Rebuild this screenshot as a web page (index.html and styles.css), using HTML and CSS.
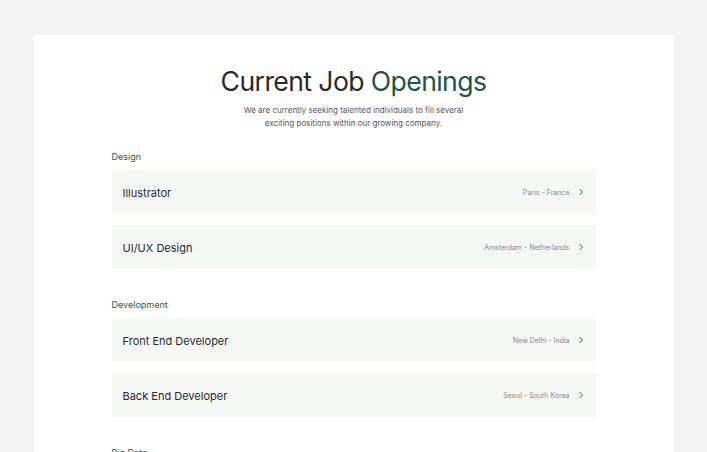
FILE: index.html
```html
<!DOCTYPE html>
<html lang="en">
<head>
<meta charset="utf-8">
<title>Current Job Openings</title>
<link rel="stylesheet" href="styles.css">
</head>
<body>
<main class="card">
  <header class="intro">
    <h1 class="title">Current Job <span class="accent">Openings</span></h1>
    <p class="lead">We are currently seeking talented individuals to fill several<br>exciting positions within our growing company.</p>
  </header>

  <section class="group">
    <h2 class="group-label">Design</h2>
    <ul class="jobs">
      <li class="job"><span class="job-name">Illustrator</span><span class="job-meta"><span class="job-loc">Paris - France</span><svg class="chev" viewBox="0 0 8 8"><path d="M2.5 1 L5.5 4 L2.5 7"/></svg></span></li>
      <li class="job"><span class="job-name">UI/UX Design</span><span class="job-meta"><span class="job-loc">Amsterdam - Netherlands</span><svg class="chev" viewBox="0 0 8 8"><path d="M2.5 1 L5.5 4 L2.5 7"/></svg></span></li>
    </ul>
  </section>

  <section class="group">
    <h2 class="group-label">Development</h2>
    <ul class="jobs">
      <li class="job"><span class="job-name">Front End Developer</span><span class="job-meta"><span class="job-loc">New Delhi - India</span><svg class="chev" viewBox="0 0 8 8"><path d="M2.5 1 L5.5 4 L2.5 7"/></svg></span></li>
      <li class="job"><span class="job-name">Back End Developer</span><span class="job-meta"><span class="job-loc">Seoul - South Korea</span><svg class="chev" viewBox="0 0 8 8"><path d="M2.5 1 L5.5 4 L2.5 7"/></svg></span></li>
    </ul>
  </section>

  <section class="group">
    <h2 class="group-label">Big Data</h2>
  </section>
</main>
</body>
</html>
```
FILE: styles.css
```css
html, body {
  margin: 0;
  padding: 0;
}
body {
  background: #f3f3f3;
  font-family: Inter, "Liberation Sans", sans-serif;
  padding-top: 35px;
  height: 452px;
  box-sizing: border-box;
  overflow: hidden;
}
.card {
  width: 640px;
  margin: 0 auto;
  background: #ffffff;
  padding: 29px 78px 40px;
  box-sizing: border-box;
  min-height: 500px;
}
.intro {
  text-align: center;
}
.title {
  margin: 0;
  font-size: 26.6px;
  line-height: 34px;
  font-weight: 400;
  letter-spacing: -0.6px;
  color: #2a2a2a;
}
.accent {
  color: #1d5446;
}
.lead {
  margin: 6px 0 0;
  font-size: 8px;
  line-height: 13px;
  color: #555555;
}
.group {
  margin-top: 21px;
}
.group + .group {
  margin-top: 30px;
}
.group-label {
  margin: 0 0 7px;
  font-size: 9px;
  line-height: 12px;
  font-weight: 400;
  color: #2a5a4e;
}
.jobs {
  list-style: none;
  margin: 0;
  padding: 0;
  display: flex;
  flex-direction: column;
  gap: 11px;
}
.job {
  height: 44px;
  background: #f6f8f6;
  display: flex;
  align-items: center;
  justify-content: space-between;
  padding: 0 11px;
}
.job-name {
  font-size: 11px;
  color: #2b2b2b;
  padding-top: 1px;
}
.job-meta {
  display: flex;
  align-items: center;
  gap: 7px;
}
.job-loc {
  font-size: 7px;
  color: #888888;
}
.chev {
  width: 8px;
  height: 8px;
  fill: none;
  stroke: #1d5446;
  stroke-width: 0.9;
}
```
